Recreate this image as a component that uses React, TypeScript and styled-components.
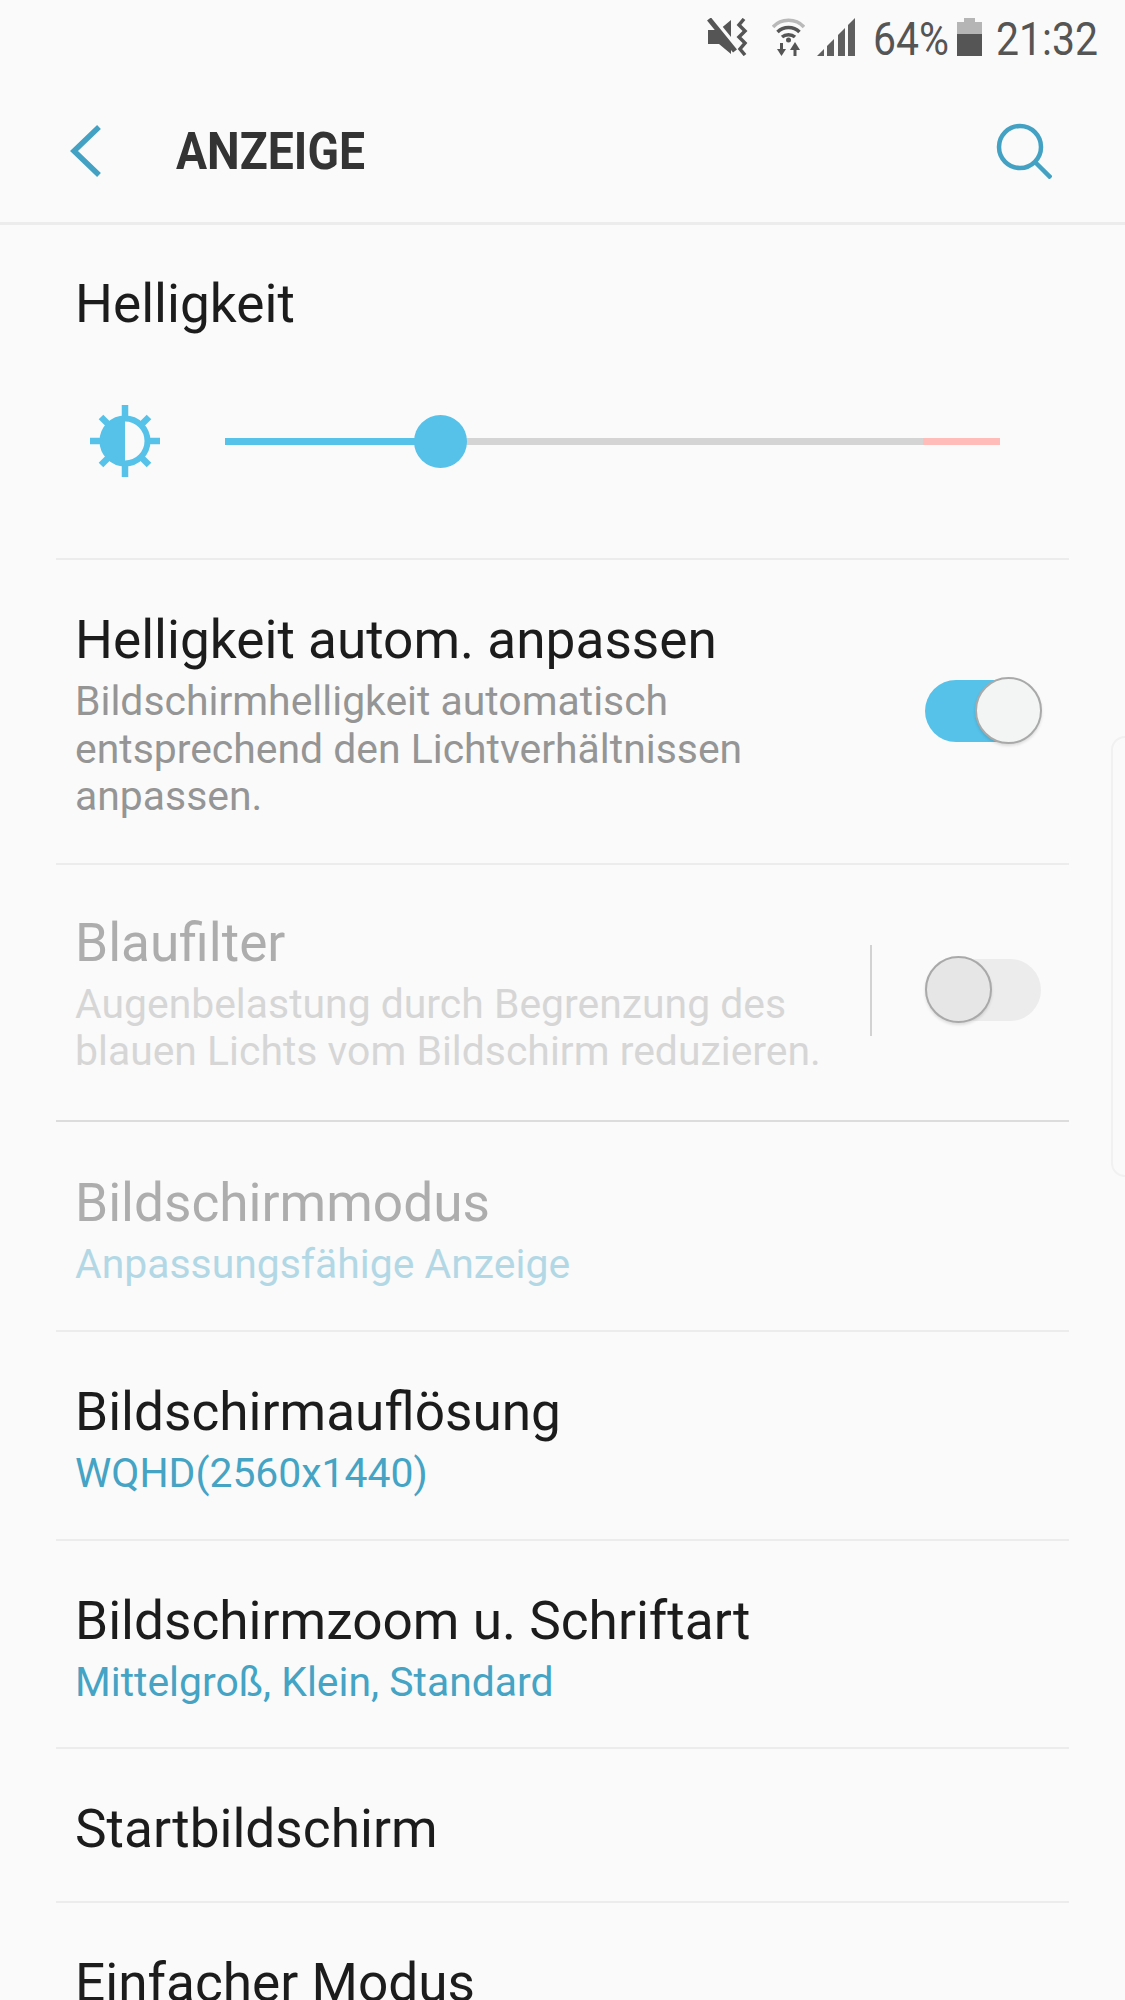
import styled, { createGlobalStyle } from "styled-components";

const GlobalStyle = createGlobalStyle`
  html, body {
    margin: 0;
    padding: 0;
    background: #fafafa;
  }
`;

const Page = styled.div`
  position: relative;
  width: 1125px;
  height: 2000px;
  overflow: hidden;
  background: #fafafa;
  font-family: Roboto, "Liberation Sans", sans-serif;
`;

const StatusBar = styled.div`
  display: flex;
  justify-content: flex-end;
  align-items: center;
  height: 74px;
  margin-bottom: 5px;
  padding-right: 28px;
  color: #555;
`;

const StatusText = styled.span<{ $width: number }>`
  display: inline-block;
  align-self: flex-start;
  width: ${(p) => p.$width}px;
  font-size: 46px;
  line-height: 79px;
  white-space: nowrap;
  transform: scaleX(0.89);
  transform-origin: left center;
`;

const StatusIcon = styled.svg<{ $gap: number }>`
  display: block;
  flex: none;
  margin-right: ${(p) => p.$gap}px;
`;

const Header = styled.header`
  display: flex;
  align-items: center;
  height: 143px;
  padding: 0 73px 0 70px;
  border-bottom: 3px solid #ececec;
`;

const BackIcon = styled.svg`
  display: block;
  flex: none;
  margin-right: 74px;
`;

const Title = styled.h1`
  flex: 1;
  margin: 0;
  padding-top: 2px;
  font-size: 52px;
  font-weight: 700;
  color: #333;
  white-space: nowrap;
  transform: scaleX(0.89);
  transform-origin: left center;
`;

const List = styled.div`
  margin: 0 56px;
`;

const BrightnessBlock = styled.div`
  height: 335px;
  padding: 41px 19px 0;
  box-sizing: border-box;
  border-bottom: 2px solid #ececec;
`;

const SliderRow = styled.div`
  display: flex;
  align-items: center;
  height: 72px;
  margin: 63px 0 0 15px;
`;

const SunIcon = styled.svg`
  display: block;
  flex: none;
  margin-right: 65px;
`;

const Track = styled.div`
  display: flex;
  align-items: center;
  position: relative;
  width: 775px;
  height: 7px;
`;

const TrackPart = styled.div<{ $width: number; $color: string }>`
  width: ${(p) => p.$width}px;
  height: 7px;
  background: ${(p) => p.$color};
`;

const Thumb = styled.div`
  position: absolute;
  left: 189px;
  top: -23px;
  width: 53px;
  height: 53px;
  border-radius: 50%;
  background: #56c2e9;
`;

const Row = styled.div<{ $top: number; $bottom: number; $strong?: boolean }>`
  display: flex;
  align-items: center;
  padding: ${(p) => p.$top}px 28px ${(p) => p.$bottom}px 19px;
  border-bottom: 2px solid ${(p) => (p.$strong ? "#dcdcdc" : "#ececec")};
`;

const RowText = styled.div`
  flex: 1;
  min-width: 0;
`;

const RowTitle = styled.div<{ $disabled?: boolean }>`
  font-size: 53.2px;
  line-height: 76px;
  color: ${(p) => (p.$disabled ? "#adadad" : "#1c1c1c")};
  white-space: nowrap;
`;

const RowSub = styled.div<{ $tone: "grey" | "faint" | "blue" | "paleBlue" }>`
  font-size: 40.9px;
  line-height: 47.5px;
  white-space: nowrap;
  color: ${(p) =>
    ({
      grey: "#959595",
      faint: "#d6d6d6",
      blue: "#45a3c4",
      paleBlue: "#b2d8e6",
    })[p.$tone]};
`;

const VerticalLine = styled.div`
  flex: none;
  align-self: center;
  width: 2px;
  height: 91px;
  margin-right: 53px;
  background: #d2d2d2;
`;

const SwitchTrack = styled.div<{ $on: boolean }>`
  position: relative;
  flex: none;
  width: 116px;
  height: 62px;
  border-radius: 31px;
  background: ${(p) => (p.$on ? "#56c2e9" : "#ececec")};
`;

const SwitchThumb = styled.div<{ $on: boolean }>`
  position: absolute;
  top: -3px;
  left: ${(p) => (p.$on ? "50px" : "0")};
  box-sizing: border-box;
  width: 67px;
  height: 67px;
  border-radius: 50%;
  border: 2px solid #a9a9a9;
  background: ${(p) => (p.$on ? "#f3f5f5" : "#e6e6e6")};
  box-shadow: 0 2px 3px rgba(0, 0, 0, 0.12);
`;

const EdgeHandle = styled.div`
  position: absolute;
  top: 736px;
  left: 1111px;
  width: 20px;
  height: 441px;
  box-sizing: border-box;
  border: 2px solid #f1f1f1;
  border-radius: 14px 0 0 14px;
`;

const MuteIcon = () => (
  <StatusIcon $gap={24} width="41" height="38" viewBox="0 0 41 38">
    <path d="M1 12h11L24 2v34L12 26H1z" fill="#555" />
    <path d="M6 0l26 32" stroke="#fafafa" strokeWidth="4" />
    <path d="M2 1l26 32" stroke="#555" strokeWidth="5" />
    <path
      d="M37 1l-5 6 6 6-6 6 6 6-5 6 5 6"
      fill="none"
      stroke="#555"
      strokeWidth="3.5"
    />
  </StatusIcon>
);

const WifiIcon = () => (
  <StatusIcon $gap={12} width="33" height="38" viewBox="0 0 33 38">
    <path d="M1 9C9 0 24 0 32 9" fill="none" stroke="#b9b9b9" strokeWidth="3.5" />
    <path d="M5.500 14c6-6 16-6 22 0" fill="none" stroke="#555" strokeWidth="3.500" />
    <path d="M10 19c3.500-3 9.500-3 13 0" fill="none" stroke="#555" strokeWidth="3.500" />
    <circle cx="16.500" cy="22" r="2.500" fill="#555" />
    <path d="M9.500 25v7" stroke="#555" strokeWidth="3" />
    <path d="M5 31h9l-4.500 7z" fill="#555" />
    <path d="M23 31v7" stroke="#555" strokeWidth="3" />
    <path d="M18 32h10l-5-8z" fill="#555" />
  </StatusIcon>
);

const SignalIcon = () => (
  <StatusIcon $gap={17} width="39" height="38" viewBox="0 0 39 38">
    <path d="M0 38l7-7v7z" fill="#5f5f5f" />
    <path d="M10 38V28l7-7v17z" fill="#5f5f5f" />
    <path d="M21 38V17l7-7v28z" fill="#5f5f5f" />
    <path d="M31 38V7l7-7v38z" fill="#5f5f5f" />
  </StatusIcon>
);

const BatteryIcon = () => (
  <StatusIcon $gap={14} width="25" height="38" viewBox="0 0 25 38">
    <path d="M7 0h11v4h7v12H0V4h7z" fill="#b5b5b5" />
    <rect x="0" y="16" width="25" height="22" fill="#555" />
  </StatusIcon>
);

const Switch: React.FC<{ on: boolean }> = ({ on }) => (
  <SwitchTrack $on={on}>
    <SwitchThumb $on={on} />
  </SwitchTrack>
);

export default function App() {
  return (
    <Page>
      <GlobalStyle />
      <StatusBar>
        <MuteIcon />
        <WifiIcon />
        <SignalIcon />
        <StatusText $width={84}>64%</StatusText>
        <BatteryIcon />
        <StatusText $width={101}>21:32</StatusText>
      </StatusBar>

      <Header>
        <BackIcon width="32" height="52" viewBox="0 0 32 52">
          <path d="M29 2L4 26l25 24" fill="none" stroke="#43a2c3" strokeWidth="5.500" />
        </BackIcon>
        <Title>ANZEIGE</Title>
        <svg width="56" height="56" viewBox="0 0 56 56">
          <circle cx="24" cy="24" r="21" fill="none" stroke="#43a2c3" strokeWidth="4.500" />
          <path d="M39 39l16 16" stroke="#43a2c3" strokeWidth="4.500" />
        </svg>
      </Header>

      <List>
        <BrightnessBlock>
          <RowTitle>Helligkeit</RowTitle>
          <SliderRow>
            <SunIcon width="70" height="72" viewBox="0 0 70 72">
              <circle cx="35" cy="36" r="22.500" fill="none" stroke="#56c2e9" strokeWidth="6" />
              <path d="M35 13a23 23 0 0 0 0 46z" fill="#56c2e9" />
              <path
                d="M35 0v12M35 60v12M0 36h10M60 36h10M11 12l8 8M51 52l8 8M59 12l-8 8M19 52l-8 8"
                stroke="#56c2e9"
                strokeWidth="6.500"
              />
            </SunIcon>
            <Track>
              <TrackPart $width={215} $color="#56c2e9" />
              <TrackPart $width={483} $color="#d4d4d4" />
              <TrackPart $width={77} $color="#ffbcb8" />
              <Thumb />
            </Track>
          </SliderRow>
        </BrightnessBlock>

        <Row $top={42} $bottom={42}>
          <RowText>
            <RowTitle>Helligkeit autom. anpassen</RowTitle>
            <RowSub $tone="grey">Bildschirmhelligkeit automatisch</RowSub>
            <RowSub $tone="grey">entsprechend den Lichtverhältnissen</RowSub>
            <RowSub $tone="grey">anpassen.</RowSub>
          </RowText>
          <Switch on />
        </Row>

        <Row $top={40} $bottom={44} $strong>
          <RowText>
            <RowTitle $disabled>Blaufilter</RowTitle>
            <RowSub $tone="faint">Augenbelastung durch Begrenzung des</RowSub>
            <RowSub $tone="faint">blauen Lichts vom Bildschirm reduzieren.</RowSub>
          </RowText>
          <VerticalLine />
          <Switch on={false} />
        </Row>

        <Row $top={43} $bottom={42}>
          <RowText>
            <RowTitle $disabled>Bildschirmmodus</RowTitle>
            <RowSub $tone="paleBlue">Anpassungsfähige Anzeige</RowSub>
          </RowText>
        </Row>

        <Row $top={42} $bottom={41}>
          <RowText>
            <RowTitle>Bildschirmauflösung</RowTitle>
            <RowSub $tone="blue">WQHD(2560x1440)</RowSub>
          </RowText>
        </Row>

        <Row $top={42} $bottom={41}>
          <RowText>
            <RowTitle>Bildschirmzoom u. Schriftart</RowTitle>
            <RowSub $tone="blue">Mittelgroß, Klein, Standard</RowSub>
          </RowText>
        </Row>

        <Row $top={42} $bottom={34}>
          <RowText>
            <RowTitle>Startbildschirm</RowTitle>
          </RowText>
        </Row>

        <Row $top={42} $bottom={34}>
          <RowText>
            <RowTitle>Einfacher Modus</RowTitle>
          </RowText>
        </Row>
      </List>

      <EdgeHandle />
    </Page>
  );
}
